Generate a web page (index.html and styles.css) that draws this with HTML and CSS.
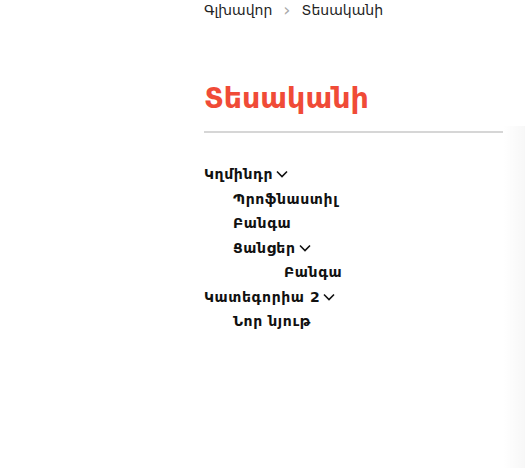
FILE: index.html
```html
<!DOCTYPE html>
<html lang="hy">
<head>
<meta charset="utf-8">
<link rel="stylesheet" href="styles.css">
</head>
<body>
<div class="page">
  <main class="content">
    <nav class="crumbs">
      <a class="crumb">Գլխավոր</a>
      <span class="sep">›</span>
      <span class="crumb">Տեսականի</span>
    </nav>
    <h1 class="title">Տեսականի</h1>
    <ul class="tree">
      <li><span class="item">Կղմինդր <svg class="chev" viewBox="0 0 12 8"><path d="M1 1.5l5 5 5-5" fill="none" stroke="#111" stroke-width="1.6"/></svg></span>
        <ul class="tree sub">
          <li><span class="item">Պրոֆնաստիլ</span></li>
          <li><span class="item">Բանգա</span></li>
          <li><span class="item">Ցանցեր <svg class="chev" viewBox="0 0 12 8"><path d="M1 1.5l5 5 5-5" fill="none" stroke="#111" stroke-width="1.6"/></svg></span>
            <ul class="tree sub2">
              <li><span class="item">Բանգա</span></li>
            </ul>
          </li>
        </ul>
      </li>
      <li><span class="item">Կատեգորիա 2 <svg class="chev" viewBox="0 0 12 8"><path d="M1 1.5l5 5 5-5" fill="none" stroke="#111" stroke-width="1.6"/></svg></span>
        <ul class="tree sub">
          <li><span class="item">Նոր նյութ</span></li>
        </ul>
      </li>
    </ul>
  </main>
  <div class="shade"></div>
</div>
</body>
</html>
```
FILE: styles.css
```css
html, body { margin: 0; padding: 0; background: #fff; }
body { font-family: "DejaVu Sans", "Noto Sans", sans-serif; color: #111; }
.page { display: flex; min-height: 468px; }
.content { margin-left: 204px; width: 299px; }
.crumbs { display: flex; align-items: center; gap: 11px; font-size: 14px; line-height: 20px; color: #222; }
.sep { color: #aaa; font-size: 18px; }
.title { margin: 59px 0 0; font-size: 28.5px; line-height: 40px; color: #f04b37; font-weight: 700; padding-bottom: 12px; border-bottom: 2px solid #d6d6d6; }
.tree { list-style: none; margin: 0; padding: 0; }
.content > .tree { margin-top: 29px; }
.item { display: inline-flex; align-items: center; gap: 3px; font-size: 14px; letter-spacing: 0.6px; font-weight: 700; line-height: 24.5px; }
.sub { padding-left: 29px; }
.sub2 { padding-left: 51px; }
.chev { width: 12px; height: 8px; }
.shade { flex: 1; background: linear-gradient(to right, rgba(0,0,0,0) 0, rgba(0,0,0,0.03) 100%); margin-top: 126px; }
```
